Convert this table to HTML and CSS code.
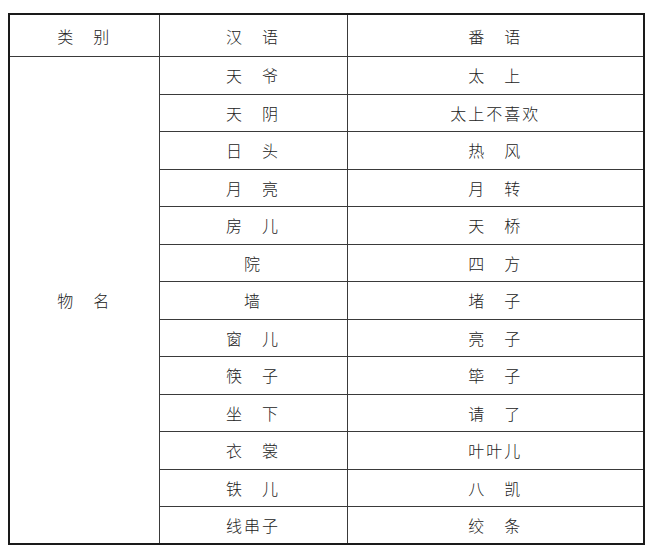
FILE: index.html
```html
<!DOCTYPE html>
<html lang="zh">
<head>
<meta charset="utf-8">
<link rel="stylesheet" href="styles.css">
</head>
<body>
<table class="vocab">
  <colgroup>
    <col class="c1"><col class="c2"><col class="c3">
  </colgroup>
  <thead>
    <tr class="head"><th>类　别</th><th>汉　语</th><th>番　语</th></tr>
  </thead>
  <tbody>
    <tr><td rowspan="13" class="cat">物　名</td><td>天　爷</td><td>太　上</td></tr>
    <tr><td>天　阴</td><td>太上不喜欢</td></tr>
    <tr><td>日　头</td><td>热　风</td></tr>
    <tr><td>月　亮</td><td>月　转</td></tr>
    <tr><td>房　儿</td><td>天　桥</td></tr>
    <tr><td>院</td><td>四　方</td></tr>
    <tr><td>墙</td><td>堵　子</td></tr>
    <tr><td>窗　儿</td><td>亮　子</td></tr>
    <tr><td>筷　子</td><td>筚　子</td></tr>
    <tr><td>坐　下</td><td>请　了</td></tr>
    <tr><td>衣　裳</td><td>叶叶儿</td></tr>
    <tr><td>铁　儿</td><td>八　凯</td></tr>
    <tr><td>线串子</td><td>绞　条</td></tr>
  </tbody>
</table>
</body>
</html>
```

FILE: styles.css
```css
html, body {
  margin: 0;
  background: #fff;
}
body {
  padding: 13px 0 0 8px;
}
.vocab {
  border-collapse: collapse;
  border: 2px solid #1a1a1a;
  width: 635px;
  table-layout: fixed;
  font-family: "Noto Sans CJK SC", sans-serif;
  font-size: 16px;
  font-weight: 300;
  color: #222;
}
.c1 { width: 150px; }
.c2 { width: 188px; }
.c3 { width: 297px; }
.vocab th, .vocab td {
  border: 1px solid #3a3a3a;
  text-align: center;
  vertical-align: middle;
  padding: 0;
  font-weight: 300;
  letter-spacing: 2px;
  line-height: 20px;
}
.vocab .head th {
  height: 41px;
}
.vocab tbody tr {
  height: 37.5px;
}
```
